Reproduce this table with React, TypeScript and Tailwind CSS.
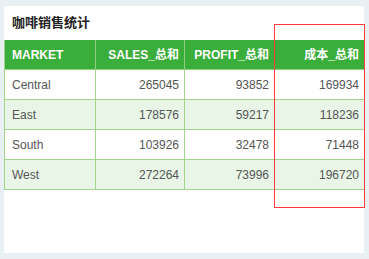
import React from "react";

const rows = [
  ["Central", "265045", "93852", "169934"],
  ["East", "178576", "59217", "118236"],
  ["South", "103926", "32478", "71448"],
  ["West", "272264", "73996", "196720"],
];

const headers = ["MARKET", "SALES_总和", "PROFIT_总和", "成本_总和"];

export default function App() {
  return (
    <div
      className="relative w-[369px] h-[259px] bg-[#e8f0f4] pt-[6px] pl-[4px]"
      style={{ fontFamily: '"Liberation Sans", Arial, "Noto Sans CJK SC", sans-serif' }}
    >
      <div className="w-[360px] h-[247px] bg-white">
        <div className="h-[34px] flex items-center pl-[8px] text-[13px] font-bold text-[#222]">
          咖啡销售统计
        </div>
        <div className="border-l border-[#a3d48c]">
          <div className="grid grid-cols-[91px_89px_90px_90px] h-[30px] bg-[#3aae3a] text-white text-[12px] font-bold">
            {headers.map((h, i) => (
              <div
                key={h}
                className={`flex items-center border-r border-b border-[#93cf80] ${
                  i === 0 ? "pl-[7px]" : "justify-end pr-[5px]"
                }`}
              >
                {h}
              </div>
            ))}
          </div>
          {rows.map((r, ri) => (
            <div
              key={r[0]}
              className={`grid grid-cols-[91px_89px_90px_90px] h-[30px] text-[12px] text-[#555] ${
                ri % 2 === 1 ? "bg-[#e8f5e7]" : "bg-white"
              }`}
            >
              {r.map((c, i) => (
                <div
                  key={i}
                  className={`flex items-center border-r border-b border-[#a3d48c] ${
                    i === 0 ? "pl-[7px]" : "justify-end pr-[5px]"
                  }`}
                >
                  {c}
                </div>
              ))}
            </div>
          ))}
        </div>
      </div>
      <div className="absolute left-[274px] top-[24px] w-[91px] h-[184px] border border-[#ff3b3b]" />
    </div>
  );
}
